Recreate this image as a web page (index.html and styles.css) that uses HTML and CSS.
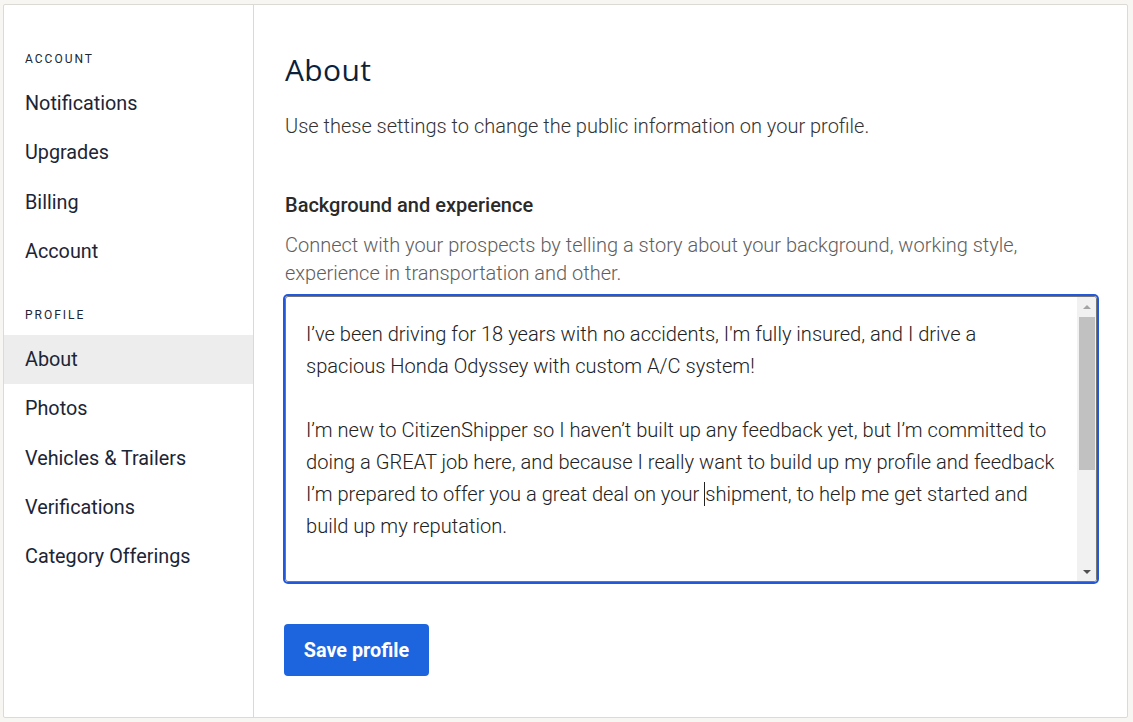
FILE: index.html
```html
<!DOCTYPE html>
<html lang="en">
<head>
<meta charset="utf-8">
<title>About - Profile settings</title>
<link rel="stylesheet" href="styles.css">
</head>
<body>
<div class="card">
  <aside class="sidebar">
    <div class="nav-section">
      <div class="nav-label">Account</div>
      <a class="nav-item" href="#">Notifications</a>
      <a class="nav-item" href="#">Upgrades</a>
      <a class="nav-item" href="#">Billing</a>
      <a class="nav-item" href="#">Account</a>
    </div>
    <div class="nav-section">
      <div class="nav-label">Profile</div>
      <a class="nav-item active" href="#">About</a>
      <a class="nav-item" href="#">Photos</a>
      <a class="nav-item" href="#">Vehicles &amp; Trailers</a>
      <a class="nav-item" href="#">Verifications</a>
      <a class="nav-item" href="#">Category Offerings</a>
    </div>
  </aside>
  <main class="main">
    <h1 class="title">About</h1>
    <p class="intro">Use these settings to change the public information on your profile.</p>
    <h2 class="field-label">Background and experience</h2>
    <p class="field-help">Connect with your prospects by telling a story about your background, working style, experience in transportation and other.</p>
    <div class="textbox">
      <div class="textbox-content">
        <p>I’ve been driving for 18 years with no accidents, I'm fully insured, and I drive a spacious Honda Odyssey with custom A/C system!</p>
        <p>I’m new to CitizenShipper so I haven’t built up any feedback yet, but I’m committed to doing a GREAT job here, and because I really want to build up my profile and feedback I’m prepared to offer you a great deal on your <span class="caret">shipment</span>, to help me get started and build up my reputation.</p>
        <p>I’ll provide you with regular updates and photos during the trip, and I will make sure everything arrives safely.</p>
      </div>
      <div class="scrollbar">
        <div class="sb-btn sb-up"><span class="arrow-up"></span></div>
        <div class="sb-track"><div class="sb-thumb"></div></div>
        <div class="sb-btn sb-down"><span class="arrow-down"></span></div>
      </div>
    </div>
    <button class="btn-primary" type="button">Save profile</button>
  </main>
</div>
</body>
</html>
```

FILE: styles.css
```css
* { box-sizing: border-box; }

html, body { height: 100%; }

body {
  margin: 0;
  padding: 4px 5px 4px 3px;
  background: #f7f6f2;
  font-family: Roboto, "Liberation Sans", Arial, sans-serif;
  color: #1c2536;
}

.card {
  display: flex;
  height: 714px;
  background: #ffffff;
  border: 1px solid #dcdad4;
  border-radius: 2px;
}

/* Sidebar */
.sidebar {
  width: 250px;
  flex: none;
  border-right: 1px solid #d9d9d9;
  padding-top: 44px;
}

.nav-section + .nav-section { margin-top: 29px; }

.nav-label {
  padding-left: 21px;
  font-size: 12px;
  line-height: 20px;
  letter-spacing: 2px;
  text-transform: uppercase;
  color: #1c2536;
  margin-bottom: 10px;
}

.nav-item {
  display: block;
  height: 49.3px;
  line-height: 49px;
  padding-left: 21px;
  font-size: 19.8px;
  color: #1c2536;
  text-decoration: none;
}

.nav-item.active { background: #ededed; }

/* Main */
.main {
  flex: 1;
  padding: 47px 30px 0 31px;
}

.title {
  margin: 0;
  font-family: "Open Sans", Inter, sans-serif;
  font-weight: 500;
  font-size: 30px;
  line-height: 36px;
  letter-spacing: 0.4px;
  color: #0e1f3b;
}

.intro {
  margin: 24px 0 0;
  font-size: 20px;
  font-weight: 300;
  line-height: 28px;
  color: #333333;
}

.field-label {
  margin: 51px 0 0;
  font-size: 20px;
  font-weight: 500;
  line-height: 28px;
  color: #2a2a2a;
}

.field-help {
  margin: 12px 0 0;
  font-size: 20px;
  font-weight: 300;
  line-height: 28px;
  color: #5e5e5e;
}

.textbox {
  display: flex;
  margin-top: 9px;
  height: 286px;
  border: 1px solid #767676;
  border-radius: 3px;
  box-shadow: 0 0 0 2px #2258d9;
  overflow: hidden;
}

.textbox-content {
  flex: 1;
  padding: 21px 22px 0 20px;
  font-size: 20.1px;
  font-weight: 300;
  line-height: 32px;
  color: #222222;
  overflow: hidden;
}

.textbox-content p { margin: 0 0 32px; }

.caret {
  border-left: 1px solid #222;
}

.scrollbar {
  width: 19px;
  flex: none;
  display: flex;
  flex-direction: column;
  background: #f1f1f1;
}

.sb-btn {
  height: 19px;
  display: flex;
  align-items: center;
  justify-content: center;
}

.sb-track {
  flex: 1;
  padding: 1px 1px 0 2px;
}

.sb-thumb {
  height: 153px;
  background: #c1c1c1;
}

.arrow-up {
  width: 0; height: 0;
  border-left: 4px solid transparent;
  border-right: 4px solid transparent;
  border-bottom: 4px solid #a3a3a3;
}

.arrow-down {
  width: 0; height: 0;
  border-left: 4px solid transparent;
  border-right: 4px solid transparent;
  border-top: 4px solid #505050;
}

.btn-primary {
  display: block;
  margin-top: 42px;
  width: 145px;
  height: 52px;
  border: none;
  border-radius: 4px;
  background: #1d64df;
  color: #ffffff;
  font-family: Roboto, "Liberation Sans", Arial, sans-serif;
  font-size: 19.8px;
  font-weight: 700;
  padding: 0;
  margin-left: -1px;
}
```
